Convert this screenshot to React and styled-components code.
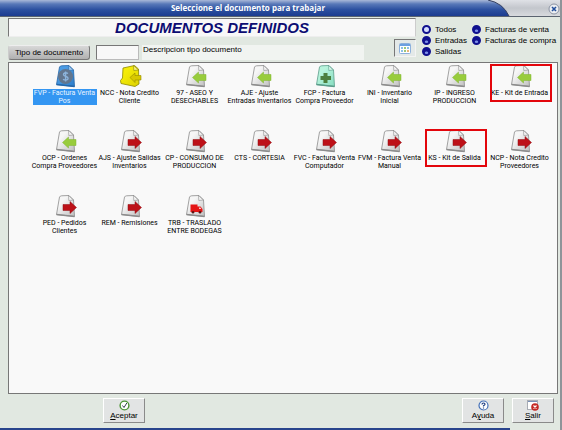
import React, { useState } from 'react';
import styled, { createGlobalStyle, css } from 'styled-components';

const GlobalStyle = createGlobalStyle`
  * {
    box-sizing: border-box;
  }
  body {
    margin: 0;
    font-family: 'Liberation Sans', Arial, sans-serif;
    font-size: 8px;
    color: #000;
  }
  button, input {
    font: inherit;
    color: inherit;
  }
`;

const Window = styled.div`
  display: flex;
  flex-direction: column;
  min-height: 100vh;
  background: #e1e8e1;
  border-right: 2px solid #8f9499;
`;

const TitleBar = styled.header`
  display: flex;
  height: 17px;
  background: linear-gradient(#dfe1e6, #c3c6cc 50%, #d8dade);
  border-bottom: 1px solid #5b6470;
`;

const TitleFill = styled.div`
  position: relative;
  flex: 1;
  height: 16px;
`;

const TitleShape = styled.svg`
  display: block;
  width: 100%;
  height: 16px;
`;

const Title = styled.h1`
  position: absolute;
  top: 0;
  left: 0;
  width: 100%;
  margin: 0;
  padding-right: 14px;
  line-height: 16px;
  font-family: 'Open Sans', Tahoma, sans-serif;
  font-size: 8px;
  font-weight: bold;
  text-align: center;
  color: #fff;
`;

const CloseButton = styled.button`
  width: 50px;
  padding: 2px 0 0;
  border: none;
  background: transparent;
  text-align: right;
  line-height: 0;
`;

const Top = styled.div`
  display: flex;
  gap: 6px;
  height: 45px;
  padding: 1px 0 0 8px;
`;

const TopLeft = styled.div`
  flex: 1;
`;

const Heading = styled.h2`
  height: 19px;
  margin: 0;
  border: 1px solid #777;
  border-right-color: #ccc;
  border-bottom-color: #eee;
  background: #f8f8f8;
  line-height: 18px;
  font-size: 15px;
  font-style: italic;
  text-align: center;
  color: #0c0c72;
`;

const Search = styled.div`
  display: flex;
  align-items: flex-end;
  height: 23px;
`;

const TypeButton = styled.button`
  width: 82px;
  height: 15px;
  padding: 0;
  border: 1px solid #777;
  border-top-color: #eee;
  border-left-color: #ccc;
  border-radius: 3px;
  background: linear-gradient(#d8d8d8, #b0b0b0);
  line-height: 12px;
`;

const CodeInput = styled.input`
  width: 43px;
  height: 15px;
  margin-left: 6px;
  border: 1px solid #777;
  border-right-color: #bbb;
  border-bottom-color: #bbb;
  background: #f8f8f8;
`;

const Description = styled.span`
  width: 222px;
  height: 15px;
  margin-left: 3px;
  padding-left: 1px;
  background: #f1f4f1;
  line-height: 10px;
`;

const CalendarButton = styled.button`
  align-self: flex-start;
  width: 22px;
  height: 18px;
  margin: 2px 0 0 auto;
  padding: 0;
  border: 1px solid #f4f4f4;
  border-top-color: #777;
  border-left-color: #777;
  background: #e4e9e8;
  line-height: 0;
`;

const Filters = styled.fieldset`
  display: grid;
  grid-template-columns: 50px 84px;
  grid-template-rows: repeat(3, 11px);
  grid-auto-flow: column;
  width: 138px;
  margin: 0;
  padding: 6px 0 0;
  border: none;
`;

const Filter = styled.label`
  display: flex;
  align-items: center;
  gap: 4px;
  line-height: 11px;
  white-space: nowrap;
`;

const Radio = styled.input`
  appearance: none;
  flex: none;
  width: 9px;
  height: 9px;
  margin: 0;
  border: 2px solid #10108e;
  border-radius: 50%;
  background: radial-gradient(circle at 50% 85%, #7d90e8 25%, #10108e 45%);

  &:checked {
    background: #d4dcff;
  }
`;

const DocumentList = styled.div`
  display: grid;
  flex: 1;
  grid-template-columns: repeat(auto-fill, 65px);
  grid-auto-rows: 65px;
  align-content: start;
  margin: 0 2px 0 8px;
  padding: 1px 0 0 23px;
  border: 1px solid #777;
  background: #f9f9f9;
`;

const Item = styled.button`
  position: relative;
  display: flex;
  flex-direction: column;
  align-items: center;
  padding: 0;
  border: none;
  background: transparent;
  ${({ $marked }) => $marked && css`
    &::after {
      content: '';
      position: absolute;
      inset: 0 0 27px 3px;
      border: 2px solid #e3060c;
    }
  `}
`;

const ItemLabel = styled.span`
  width: 64px;
  margin-top: 1px;
  font-family: Roboto, Tahoma, sans-serif;
  font-size: 7px;
  line-height: 8px;
  ${({ $selected }) => $selected && css`
    background: #3496f2;
    color: #e8f4ff;
  `}
`;

const Line = styled.span`
  display: flex;
  justify-content: center;
  white-space: nowrap;
`;

const Footer = styled.footer`
  display: flex;
  gap: 8px;
  height: 34px;
  padding: 4px 6px 0 103px;
`;

const ActionButton = styled.button`
  display: flex;
  flex-direction: column;
  align-items: center;
  width: 42px;
  height: 25px;
  padding: 1px 0 0;
  border: 1px solid #8a8a8a;
  border-top-color: #fff;
  border-left-color: #fff;
  background: #e2e4e4;
  line-height: 10px;

  &:first-child {
    margin-right: auto;
  }
`;

const BottomEdge = styled.div`
  height: 2px;
  margin-right: 50px;
  background: #28448c;
`;

const pageColors = {
  gray: ['#f6f6f6', '#c0c0c0', '#8c8c8c'],
  yellow: ['#f4ec08', '#dcd000', '#8c8600'],
  green: ['#b8f4dc', '#86dcc0', '#5a9c8a'],
  blue: ['#4b9ce4', '#2c7cc8', '#2466a8'],
};

const DocumentIcon = ({ page, mark }) => {
  const [light, dark, edge] = pageColors[page];
  return (
    <svg width="24" height="24" viewBox="0 0 24 24" aria-hidden="true">
      <defs>
        <linearGradient id={`page-${page}`} x1="0" y1="0" x2="1" y2="1">
          <stop offset="0.3" stopColor={light} />
          <stop offset="1" stopColor={dark} />
        </linearGradient>
      </defs>
      {page === 'yellow' ? (
        <path d="M5 4 L16.5 1.5 L20.5 5 L21 20 L17 22.5 L3 19.5 L2.5 16.5 L4.5 14 Z" fill="url(#page-yellow)" stroke={edge} strokeWidth="0.8" strokeLinejoin="round" />
      ) : (
        <path d="M6.5 3 Q7 2 8.5 1.8 L16 1.5 L20.5 6 L21.5 22.5 L3.5 20.5 Z" fill={`url(#page-${page})`} stroke={edge} strokeWidth="0.8" strokeLinejoin="round" />
      )}
      <path d="M15.5 1.5 L15.8 6.5 L20.5 6 Z" fill="#fff" fillOpacity="0.5" stroke={edge} strokeWidth="0.6" />
      {page !== 'yellow' && <path d="M3.5 20.5 L21.5 22.5" stroke={edge} strokeWidth="1.4" />}
      {mark === 'in' && <path d="M9.5 13.5 L15.5 8 V10.5 H23 V16.5 H15.5 V19 Z" fill="#98cc3c" stroke="#7fb42c" strokeWidth="0.5" />}
      {mark === 'credit' && <path d="M12 13.5 L17 9 V11.5 H23 V16 H17 V18.5 Z" fill="#d8c800" stroke="#968c00" strokeWidth="0.6" />}
      {mark === 'out' && <path d="M23.5 13.5 L17 7.5 V10.5 H10 V16.5 H17 V19.5 Z" fill="#bd1118" stroke="#8e0c10" strokeWidth="0.5" />}
      {mark === 'plus' && <path d="M10.5 9 H14.5 V12 H18 V16 H14.5 V19 H10.5 V16 H7.5 V12 H10.5 Z" fill="#4c7f3e" />}
      {mark === 'money' && (
        <g fill="none">
          <circle cx="12.5" cy="12.5" r="7.5" fill="#62768e" />
          <path d="M15 9.5 Q12.5 8 10.8 9.5 Q9.8 11.5 12.5 12.3 Q15.8 13.2 14.8 15.2 Q13 16.8 10 15.3 M12.6 7.5 V17.5" stroke="#8cb4dc" strokeWidth="1.4" />
        </g>
      )}
      {mark === 'truck' && (
        <g>
          <path d="M7.5 10.5 H14.5 V18 H7.5 Z M14.5 12.5 H17.5 L19.5 15 V18 H14.5 Z" fill="#e41414" />
          <path d="M16 13.5 H17.3 L18.4 15 H16 Z" fill="#f6c8c8" />
          <circle cx="10" cy="18.3" r="1.3" fill="#5c1414" />
          <circle cx="17" cy="18.3" r="1.3" fill="#5c1414" />
        </g>
      )}
    </svg>
  );
};

const documents = [
  { code: 'FVP', lines: ['FVP - Factura Venta', 'Pos'], page: 'blue', mark: 'money' },
  { code: 'NCC', lines: ['NCC - Nota Credito', 'Cliente'], page: 'yellow', mark: 'credit' },
  { code: '97', lines: ['97 - ASEO Y', 'DESECHABLES'], mark: 'in' },
  { code: 'AJE', lines: ['AJE - Ajuste', 'Entradas Inventarios'], mark: 'in' },
  { code: 'FCP', lines: ['FCP - Factura', 'Compra Proveedor'], page: 'green', mark: 'plus' },
  { code: 'INI', lines: ['INI - Inventario', 'Inicial'], mark: 'in' },
  { code: 'IP', lines: ['IP - INGRESO', 'PRODUCCION'], mark: 'in' },
  { code: 'KE', lines: ['KE - Kit de Entrada'], mark: 'in', marked: true },
  { code: 'OCP', lines: ['OCP - Ordenes', 'Compra Proveedores'], mark: 'in' },
  { code: 'AJS', lines: ['AJS - Ajuste Salidas', 'Inventarios'], mark: 'out' },
  { code: 'CP', lines: ['CP - CONSUMO DE', 'PRODUCCION'], mark: 'out' },
  { code: 'CTS', lines: ['CTS - CORTESIA'], mark: 'out' },
  { code: 'FVC', lines: ['FVC - Factura Venta', 'Computador'], mark: 'out' },
  { code: 'FVM', lines: ['FVM - Factura Venta', 'Manual'], mark: 'out' },
  { code: 'KS', lines: ['KS - Kit de Salida'], mark: 'out', marked: true },
  { code: 'NCP', lines: ['NCP - Nota Credito', 'Proveedores'], mark: 'out' },
  { code: 'PED', lines: ['PED - Pedidos', 'Clientes'], mark: 'out' },
  { code: 'REM', lines: ['REM - Remisiones'], mark: 'out' },
  { code: 'TRB', lines: ['TRB - TRASLADO', 'ENTRE BODEGAS'], mark: 'truck' },
];

const filters = ['Todos', 'Entradas', 'Salidas', 'Facturas de venta', 'Facturas de compra'];

const App = () => {
  const [filter, setFilter] = useState('Todos');
  const [selected, setSelected] = useState('FVP');

  return (
    <>
      <GlobalStyle />
      <Window>
        <TitleBar>
          <TitleFill>
            <TitleShape viewBox="0 0 510 16" preserveAspectRatio="xMaxYMid slice" aria-hidden="true">
              <defs>
                <linearGradient id="title" x1="0" y1="0" x2="0" y2="1">
                  <stop offset="0" stopColor="#a9b8d8" />
                  <stop offset="0.25" stopColor="#5878b8" />
                  <stop offset="0.6" stopColor="#2c50a0" />
                  <stop offset="1" stopColor="#1c3c90" />
                </linearGradient>
              </defs>
              <path d="M0 0 H488 Q503 3 509 16 H0 Z" fill="url(#title)" />
              <path d="M488 0 Q503 3 509 16" fill="none" stroke="#333f60" />
            </TitleShape>
            <Title>Seleccione el documento para trabajar</Title>
          </TitleFill>
          <CloseButton aria-label="Cerrar">
            <svg width="12" height="12" viewBox="0 0 12 12">
              <circle cx="6" cy="6" r="5" fill="#eceef2" stroke="#8c94a4" />
              <path d="M4 4 L8 8 M8 4 L4 8" stroke="#24509c" strokeWidth="1.6" />
            </svg>
          </CloseButton>
        </TitleBar>

        <Top>
          <TopLeft>
            <Heading>DOCUMENTOS DEFINIDOS</Heading>
            <Search>
              <TypeButton>Tipo de documento</TypeButton>
              <CodeInput aria-label="Tipo de documento" />
              <Description>Descripcion tipo documento</Description>
              <CalendarButton aria-label="Calendario">
                <svg width="12" height="11" viewBox="0 0 12 11">
                  <rect x="0.5" y="0.5" width="11" height="10" rx="1" fill="#fff" stroke="#8cb0dc" />
                  <path d="M1 2 H11" stroke="#6ca0e0" strokeWidth="2" />
                  <path d="M2 5 H4 M8 5 H10 M2 8 H4" stroke="#8cc0e8" strokeWidth="2" />
                  <path d="M5 5 H7 M5 8 H7" stroke="#9cc878" strokeWidth="2" />
                  <path d="M8 8 H10" stroke="#e8b478" strokeWidth="2" />
                </svg>
              </CalendarButton>
            </Search>
          </TopLeft>
          <Filters aria-label="Filtro">
            {filters.map((name) => (
              <Filter key={name}>
                <Radio type="radio" name="filter" checked={filter === name} onChange={() => setFilter(name)} />
                {name}
              </Filter>
            ))}
          </Filters>
        </Top>

        <DocumentList>
          {documents.map(({ code, lines, page = 'gray', mark, marked }) => (
            <Item key={code} $marked={marked} onClick={() => setSelected(code)}>
              <DocumentIcon page={page} mark={mark} />
              <ItemLabel $selected={selected === code}>
                {lines.map((line) => (
                  <Line key={line}>{line}</Line>
                ))}
              </ItemLabel>
            </Item>
          ))}
        </DocumentList>

        <Footer>
          <ActionButton>
            <svg width="11" height="11" viewBox="0 0 11 11" aria-hidden="true">
              <circle cx="5.5" cy="5.5" r="4.4" fill="#fff" stroke="#4c9434" strokeWidth="1.4" />
              <path d="M3.5 5.5 L5 7.5 L7.8 3" fill="none" stroke="#33404c" />
            </svg>
            <span><u>A</u>ceptar</span>
          </ActionButton>
          <ActionButton>
            <svg width="11" height="11" viewBox="0 0 11 11" aria-hidden="true">
              <circle cx="5.5" cy="5.5" r="4.5" fill="#fff" stroke="#4470b8" strokeWidth="1.2" />
              <path d="M4 4.4 Q4 3 5.5 3 Q7 3 7 4.2 Q7 5 5.5 5.8 V6.5 M5.5 7.4 V8.5" fill="none" stroke="#1c3c80" strokeWidth="1.2" />
            </svg>
            <span>A<u>y</u>uda</span>
          </ActionButton>
          <ActionButton>
            <svg width="12" height="11" viewBox="0 0 12 11" aria-hidden="true">
              <rect x="0.5" y="0.5" width="10" height="9" fill="#fff" stroke="#a8acb4" />
              <path d="M1 1.5 H10" stroke="#7890b8" />
              <circle cx="8" cy="7" r="3.8" fill="#c42824" />
              <path d="M6.5 5.5 L9.5 8.5 M9.5 5.5 L6.5 8.5" stroke="#fff" strokeWidth="1.2" />
            </svg>
            <span><u>S</u>alir</span>
          </ActionButton>
        </Footer>
        <BottomEdge />
      </Window>
    </>
  );
};

export default App;
